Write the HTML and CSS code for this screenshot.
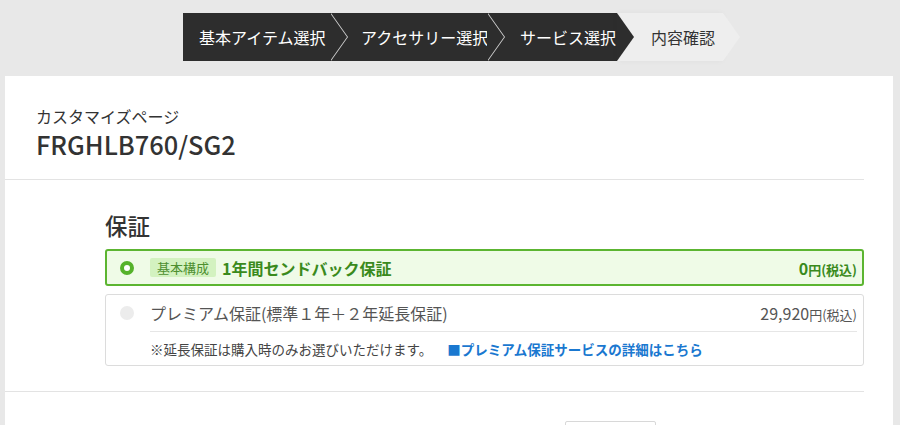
FILE: index.html
```html
<!DOCTYPE html>
<html lang="ja">
<head>
<meta charset="utf-8">
<title>カスタマイズページ</title>
<link rel="stylesheet" href="styles.css">
</head>
<body>
<nav class="steps">
  <div class="step step-1 dark lined">基本アイテム選択</div>
  <div class="step step-2 dark lined">アクセサリー選択</div>
  <div class="step step-3 dark arrow">サービス選択</div>
  <div class="step step-4 current">内容確認</div>
</nav>
<main class="card">
  <div class="content">
    <header class="head">
      <p class="sub">カスタマイズページ</p>
      <h1 class="model">FRGHLB760/SG2</h1>
    </header>
    <section class="section">
      <h2 class="sec-title">保証</h2>
      <div class="opt opt-selected">
        <span class="radio radio-on"></span>
        <div class="opt-row">
          <div class="opt-left"><span class="badge">基本構成</span><span class="opt-name-sel">1年間センドバック保証</span></div>
          <div class="price-sel">0<span class="yen">円(税込)</span></div>
        </div>
      </div>
      <div class="opt opt-plain">
        <span class="radio radio-off"></span>
        <div class="opt-body">
          <div class="opt-row row-top">
            <div class="opt-name">プレミアム保証(標準１年＋２年延長保証)</div>
            <div class="price">29,920<span class="yen">円(税込)</span></div>
          </div>
          <div class="opt-note">
            <span class="note">※延長保証は購入時のみお選びいただけます。</span>
            <a class="link" href="#">■プレミアム保証サービスの詳細はこちら</a>
          </div>
        </div>
      </div>
    </section>
    <div class="bottom">
      <div class="btn"></div>
    </div>
  </div>
</main>
</body>
</html>
```

FILE: styles.css
```css
* { box-sizing: border-box; }
html, body { margin: 0; padding: 0; }
body {
  background: #e8e8e8;
  font-family: "Noto Sans CJK JP", "Noto Sans", sans-serif;
  color: #333;
  padding-top: 13px;
  overflow: hidden;
  height: 425px;
}
.steps {
  display: flex;
  margin-left: 183px;
  height: 48px;
}
.step {
  position: relative;
  height: 48px;
  display: flex;
  align-items: center;
  font-size: 16px;
  line-height: 1;
  white-space: nowrap;
}
.dark { background: #2d2d2d; color: #fff; }
.step-1 { width: 147px; padding-left: 16px; }
.step-2 { width: 157px; padding-left: 31px; }
.step-3 { width: 130px; padding-left: 33px; }
.step-4 { width: 106px; padding-left: 34px; background: #eeeeee; color: #333; box-shadow: 0 0 6px rgba(0,0,0,0.04); }
.lined::before,
.lined::after,
.arrow::after,
.current::after {
  content: "";
  position: absolute;
  top: 0;
  height: 48px;
  width: 17px;
  clip-path: polygon(0 0, 100% 50%, 0 100%);
}
.lined::before { left: calc(100% + 1px); background: #d6d6d6; z-index: 1; }
.lined::after { left: 100%; background: #2d2d2d; z-index: 2; }
.arrow::after { left: 100%; background: #2d2d2d; z-index: 2; }
.current::after { left: 100%; background: #eeeeee; }

.card {
  margin: 15px 0 0 5px;
  width: 888px;
  background: #fff;
  height: 349px;
  overflow: hidden;
}
.content { width: 859px; }
.head {
  padding: 29px 0 18px 31px;
  border-bottom: 1px solid #e3e3e3;
}
.sub { margin: 0; font-size: 16px; line-height: 22px; color: #333; }
.model { margin: 1px 0 0; font-size: 25.4px; line-height: 33px; font-weight: 500; color: #333; }

.section { padding: 30px 0 0 100px; }
.sec-title { margin: 0 0 9px; font-size: 22.5px; line-height: 30px; font-weight: 500; color: #333; }

.opt { display: flex; border-radius: 3px; }
.opt-selected {
  height: 37px;
  border: 2px solid #5cb531;
  background: #effbe7;
  align-items: center;
  padding: 0 5px 0 13px;
}
.opt-plain {
  margin-top: 8px;
  border: 1px solid #dcdcdc;
  padding: 0 6px 0 14px;
}
.radio { flex: none; width: 14px; height: 14px; border-radius: 50%; margin-right: 16px; }
.radio-on { border: 4px solid #55b22a; background: #fff; }
.radio-off { background: #ececec; margin-top: 11px; }
.opt-row { flex: 1; display: flex; align-items: center; justify-content: space-between; }
.opt-left { display: flex; align-items: center; }
.badge {
  background: #d3f2c0;
  color: #4d8f2f;
  font-size: 13px;
  line-height: 19px;
  padding: 0 7px;
  border-radius: 2px;
  margin-right: 6px;
}
.opt-name-sel { font-size: 16px; font-weight: 700; color: #3a8a1c; }
.price-sel { font-size: 16px; font-weight: 700; color: #3a8a1c; }
.price-sel .yen { font-size: 13px; }
.opt-body { flex: 1; }
.row-top { height: 37px; border-bottom: 1px solid #e6e6e6; }
.opt-name { font-size: 16px; color: #555; }
.price { font-size: 16px; color: #555; }
.price .yen { font-size: 13px; }
.opt-note { height: 33px; display: flex; align-items: center; font-size: 13.5px; }
.note { color: #444; }
.link { margin-left: 15px; color: #1a78d0; font-weight: 700; text-decoration: none; }

.bottom { margin-top: 25px; border-top: 1px solid #e3e3e3; height: 60px; padding: 29px 0 0 560px; }
.btn { width: 91px; height: 30px; border: 1px solid #d8d8d8; border-radius: 2px; }
```
